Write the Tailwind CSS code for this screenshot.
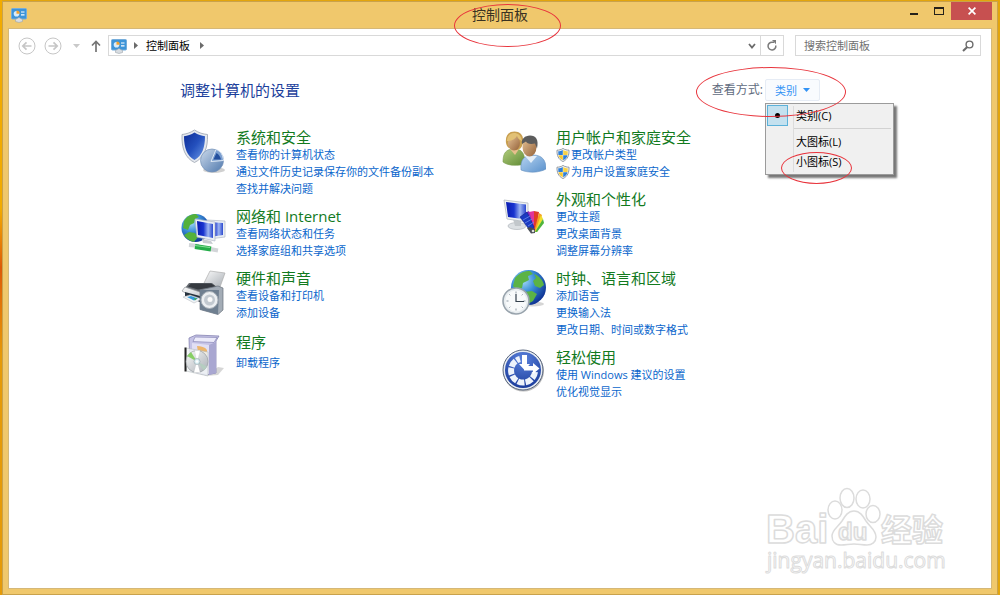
<!DOCTYPE html>
<html lang="zh-CN">
<head>
    <meta charset="UTF-8">
    <meta name="viewport" content="width=device-width, initial-scale=1.0">
    <title>控制面板</title>
    <script src="https://cdn.jsdelivr.net/npm/@tailwindcss/browser@4"></script>
</head>
<body class="relative flex min-h-screen bg-[#e3a50c] px-[2px] pt-px font-['Open_Sans','Noto_Sans_CJK_SC',sans-serif] text-[11px] leading-[17px] text-black">
    <!-- desktop showing past the left edge of the window -->
    <div class="absolute inset-y-0 left-0 w-[2px] bg-linear-to-b from-[#f2ab00] from-35% via-[#dc5a08] via-45% to-[#e59a08] to-60%"></div>

    <!-- shared shapes -->
    <svg class="absolute h-0 w-0" aria-hidden="true">
        <defs>
            <linearGradient id="blue" x1="0" y1="0" x2="1" y2="1"><stop offset="0" stop-color="#0d2c96"/><stop offset=".5" stop-color="#2450bd"/><stop offset="1" stop-color="#6d9ae6"/></linearGradient>
            <linearGradient id="screen" x1="0" y1="0" x2="1" y2="0"><stop offset="0" stop-color="#0a1bb0"/><stop offset=".4" stop-color="#1934d0"/><stop offset=".7" stop-color="#9db5f2"/><stop offset="1" stop-color="#2b48cf"/></linearGradient>
            <linearGradient id="silver" x1="0" y1="0" x2="1" y2="1"><stop offset="0" stop-color="#fafafa"/><stop offset="1" stop-color="#a9afb5"/></linearGradient>
            <linearGradient id="steel" x1="0" y1="0" x2="1" y2="1"><stop offset="0" stop-color="#cbd9ea"/><stop offset="1" stop-color="#5079ae"/></linearGradient>
            <linearGradient id="skin" x1="0" y1="0" x2="1" y2="1"><stop offset="0" stop-color="#e6c396"/><stop offset="1" stop-color="#94623a"/></linearGradient>
            <linearGradient id="green" x1="0" y1="0" x2="1" y2="1"><stop offset="0" stop-color="#b2cd7c"/><stop offset="1" stop-color="#5f8a35"/></linearGradient>
            <linearGradient id="shirt" x1="0" y1="0" x2="1" y2="1"><stop offset="0" stop-color="#b7d4f1"/><stop offset="1" stop-color="#5a91cc"/></linearGradient>
            <radialGradient id="ocean" cx=".35" cy=".3" r=".75"><stop offset="0" stop-color="#a8dcf8"/><stop offset=".45" stop-color="#3a8ed8"/><stop offset="1" stop-color="#0c2f91"/></radialGradient>
            <radialGradient id="royal" cx=".5" cy=".2" r=".8"><stop offset="0" stop-color="#5b82dc"/><stop offset="1" stop-color="#1b3c9c"/></radialGradient>
            <symbol id="panel" viewBox="0 0 16 16">
                <rect x=".5" y="1.500" width="15" height="10.500" rx="1" fill="#3d94d8" stroke="#75addb"/>
                <circle cx="5.500" cy="6.800" r="2.800" fill="#d8ecfa"/><path d="M5.500 6.800V3.500A3.200 3.200 0 0 1 8.700 6.800z" fill="#f2a12e"/>
                <path d="M10 5h3.500M10 7.800h3.500" stroke="#fff" stroke-width="1.200"/>
                <path d="M4.500 12.500l3.500-2 3.500 2v2L8 15.500l-3.500-1z" fill="#d8dde2" stroke="#9aa2aa" stroke-width=".6"/>
            </symbol>
            <symbol id="uac" viewBox="0 0 14 14">
                <path d="M7 .5C5 1.800 3 2.200 1 2.200 .8 7.500 2.500 11.500 7 13.500c4.500-2 6.200-6 6-11.300C11 2.200 9 1.800 7 .5z" fill="#fff" stroke="#8e969e"/>
                <path d="M6.800 2C5.300 2.900 3.800 3.200 2.200 3.200L2.400 7h4.400z" fill="#2f7fd8"/><path d="M7.200 2c1.500.9 3 1.200 4.600 1.200L11.600 7H7.200z" fill="#f7d148"/>
                <path d="M2.500 7.300h4.300v4.900C4.200 11 2.900 9.300 2.500 7.300z" fill="#f7c931"/><path d="M11.500 7.300H7.200v4.900c2.600-1.200 3.900-2.900 4.300-4.900z" fill="#2f7fd8"/>
            </symbol>
        </defs>
    </svg>

    <div class="relative flex flex-1 flex-col border border-[#c9a24c] bg-[#f0c86c]">
        <!-- title bar -->
        <header class="grid h-[26px] grid-cols-[1fr_auto_1fr]">
            <svg class="mt-[5px] ml-2 h-4 w-4"><use href="#panel"/></svg>
            <h1 class="relative text-sm leading-[25px] text-[#3a3222]">控制面板
                <span class="absolute top-[2px] -left-[18px] z-10 h-[43px] w-[107px] rounded-[50%] border border-[#e8343c]"></span>
            </h1>
            <div class="flex justify-end pr-[5px]">
                <button type="button" aria-label="最小化" class="flex h-[18px] w-[25px] justify-center pt-[11px]"><span class="h-[2px] w-[8px] bg-[#26221a]"></span></button>
                <button type="button" aria-label="最大化" class="flex h-[18px] w-[25px] justify-center pt-[5px]"><span class="h-[8px] w-[10px] border border-t-2 border-[#26221a]"></span></button>
                <button type="button" aria-label="关闭" class="flex h-[18px] w-[41px] items-center justify-center bg-[#c75050]">
                    <svg class="h-2 w-2" viewBox="0 0 8 8"><path d="M.6 .6l6.800 6.800M7.400 .6L.6 7.400" stroke="#fff" stroke-width="1.700"/></svg>
                </button>
            </div>
        </header>

        <div class="relative mx-[5px] mb-[5px] flex-1 border border-[#d5b878] bg-white">
            <!-- navigation bar -->
            <nav class="flex h-[27px] items-stretch pt-[6px] pr-[10px] pl-[9px]">
                <button type="button" aria-label="后退" class="flex w-[18px] items-center">
                    <svg class="h-[18px] w-[18px]" viewBox="0 0 18 18" fill="none" stroke="#c6c6c6"><circle cx="9" cy="9" r="8"/><path d="M13.500 9H5M8.500 5.300L4.800 9l3.700 3.700" stroke-width="1.700"/></svg>
                </button>
                <button type="button" aria-label="前进" class="ml-2 flex w-[18px] items-center">
                    <svg class="h-[18px] w-[18px]" viewBox="0 0 18 18" fill="none" stroke="#c6c6c6"><circle cx="9" cy="9" r="8"/><path d="M4.500 9H13M9.500 5.300L13.200 9l-3.700 3.700" stroke-width="1.700"/></svg>
                </button>
                <button type="button" aria-label="最近浏览的位置" class="ml-2 flex w-3 items-center justify-center">
                    <svg class="h-1 w-[7px]" viewBox="0 0 7 4"><path d="M0 0h7L3.500 4z" fill="#c9c9c9"/></svg>
                </button>
                <button type="button" aria-label="向上" class="ml-2 flex w-3 items-center justify-center">
                    <svg class="h-3 w-[10px]" viewBox="0 0 10 12" fill="none" stroke="#757575" stroke-width="1.700"><path d="M5 12V1.500M1 5.500l4-4 4 4"/></svg>
                </button>
                <div class="ml-[6px] flex flex-1 items-center border border-[#d9d9d9] pl-[2px]">
                    <svg class="h-4 w-4"><use href="#panel"/></svg>
                    <svg class="ml-[7px] h-[7px] w-1" viewBox="0 0 4 7"><path d="M0 0l4 3.500L0 7z" fill="#6b6b6b"/></svg>
                    <a href="#" class="ml-2 pb-px">控制面板</a>
                    <svg class="ml-[10px] h-[7px] w-1" viewBox="0 0 4 7"><path d="M0 0l4 3.500L0 7z" fill="#6b6b6b"/></svg>
                    <button type="button" aria-label="以前的位置" class="mr-1 ml-auto">
                        <svg class="h-[6px] w-2" viewBox="0 0 8 6" fill="none" stroke="#6b6b6b" stroke-width="1.800"><path d="M1 1l3 3.500L7 1"/></svg>
                    </button>
                </div>
                <button type="button" aria-label="刷新" class="flex w-[23px] items-center justify-center border border-l-0 border-[#d9d9d9]">
                    <svg class="h-[11px] w-[10px]" viewBox="0 0 10 11" fill="none" stroke="#7a7a7a" stroke-width="1.500"><path d="M8.800 5.500A3.900 3.900 0 1 1 5 2.200h2"/><path d="M5 0h4v4.200z" fill="#7a7a7a" stroke="none"/></svg>
                </button>
                <div class="ml-[11px] flex w-[186px] items-center border border-[#d9d9d9] pr-[6px] pl-2">
                    <input type="search" aria-label="搜索控制面板" placeholder="搜索控制面板" class="min-w-0 flex-1 pb-px outline-none placeholder:text-[#707070]">
                    <svg class="h-3 w-3" viewBox="0 0 12 12" fill="none" stroke="#6b6b6b"><circle cx="7.500" cy="4.500" r="3.400" stroke-width="1.400"/><path d="M5 7.200L1 11" stroke-width="2"/></svg>
                </div>
            </nav>

            <main class="px-[171px] pt-[23px]">
                <div class="flex h-[22px] items-center justify-between">
                    <h2 class="text-[15px] text-[#1c3f9c]">调整计算机的设置</h2>
                    <div class="relative flex items-center">
                        <span id="view-label" class="text-xs text-[#5f6b7d]">查看方式:</span>
                        <button type="button" aria-haspopup="true" aria-labelledby="view-label" class="ml-[2px] flex h-[22px] w-[55px] items-center justify-center gap-[6px] rounded-xs border border-[#e6ecf5] bg-[#f9fbfe] text-[#3393f5]">类别
                            <svg class="h-1 w-[7px]" viewBox="0 0 7 4"><path d="M0 0h7L3.500 4z" fill="#3393f5"/></svg>
                        </button>
                        <div role="menu" class="absolute top-[24px] right-[-74px] w-[129px] border border-[#9b9b9b] bg-[#f0f0f0] p-px pb-[3px] shadow-[3px_3px_2px_#777]">
                            <div class="absolute inset-y-[2px] left-[27px] border-l border-[#dcdcdc]"></div>
                            <button type="button" role="menuitemradio" aria-checked="true" class="relative flex h-[21px] w-full items-center">
                                <span class="flex h-[21px] w-[21px] items-center justify-center border border-[#5cb2da] bg-[#c4e1ef]"><span class="h-[5px] w-[5px] rounded-full bg-black"></span></span>
                                <span class="ml-2 pb-px">类别(C)</span>
                            </button>
                            <div class="mt-[2px] mr-px mb-[2px] ml-[26px] border-b border-[#d2d2d2]"></div>
                            <button type="button" role="menuitemradio" aria-checked="false" class="flex h-5 w-full items-center pl-[29px]">大图标(L)</button>
                            <button type="button" role="menuitemradio" aria-checked="false" class="relative flex h-5 w-full items-center pl-[29px]">小图标(S)
                                <span class="absolute top-px left-[14px] h-8 w-[71px] rounded-[50%] border border-[#e8343c]"></span>
                            </button>
                        </div>
                        <span class="pointer-events-none absolute -top-3 -left-4 h-[50px] w-[150px] rounded-[50%] border border-[#e8343c]"></span>
                    </div>
                </div>

                <div class="mt-[27px] grid grid-cols-2">
                    <ul class="flex flex-col gap-[10px]">
                        <li class="flex gap-[10px]">
                            <svg class="-mb-4 h-[46px] w-[46px]" viewBox="0 0 46 46">
                                <path d="M14.500 2C10 5 6 6 2 6.500 1.500 20 5 30 14.500 34.500 24 30 28 20 27.500 6.500 23 6 19 5 14.500 2z" fill="#e4e8ee" stroke="#9aa2ae" stroke-width=".8"/>
                                <path d="M14.500 4.500C11 6.800 7.500 7.900 4 8.300 4 20 7 28 14.500 32 22 28 25 20 25 8.300 21.500 7.900 18 6.800 14.500 4.500z" fill="url(#blue)"/>
                                <ellipse cx="34" cy="42" rx="11" ry="3" fill="#777" opacity=".35"/>
                                <circle cx="32" cy="32.500" r="11.500" fill="url(#steel)" stroke="#7592b8" stroke-width=".7"/>
                                <path d="M31 33.500L36 21.500c5 1.500 7 6 7.500 11z" fill="#7b9fd0" stroke="#dfe9f5"/><path d="M33.500 31.500L36.500 25c2.500 1.500 4 4 4.500 6.500z" fill="#24509e"/>
                            </svg>
                            <div>
                                <h3 class="text-[15px] leading-[18px]"><a href="#" class="text-[#127a1e]">系统和安全</a></h3>
                                <ul class="text-[#0a66cc]">
                                    <li><a href="#">查看你的计算机状态</a></li>
                                    <li><a href="#">通过文件历史记录保存你的文件备份副本</a></li>
                                    <li><a href="#">查找并解决问题</a></li>
                                </ul>
                            </div>
                        </li>
                        <li class="flex gap-[10px]">
                            <svg class="h-[46px] w-[46px]" viewBox="0 0 46 46">
                                <circle cx="15.500" cy="21" r="14" fill="url(#ocean)"/>
                                <path d="M4 14c3-5 7-7 12-7l3 3-4 2-1 4-4 2-2 5-5-2zM9 25l6 1 3 4-4 5c-5-1-8-4-10-7z" fill="#54b13b"/>
                                <path d="M27 13l18 1v16l-16 2z" fill="#e9eef5" stroke="#b1b9c5" stroke-width=".7"/><path d="M29 15l14 1v12l-13 2z" fill="url(#screen)"/>
                                <path d="M15 12l20 3v19l-18-4z" fill="#e9eef5" stroke="#b1b9c5" stroke-width=".7"/><path d="M17 14l16 3v14l-15-3z" fill="url(#screen)"/>
                                <path d="M22 32l9 2 2 3-10-1z" fill="#c8ccd1"/>
                                <path d="M9 38l10 1M30 42l8 1.500" stroke="#d2d5d8" stroke-width="4"/><path d="M15 39.500l16 2.500" stroke="#25ad49" stroke-width="5"/><path d="M15 38.500l15 2" stroke="#86e096" stroke-width="1"/>
                            </svg>
                            <div>
                                <h3 class="text-[15px] leading-[18px]"><a href="#" class="text-[#127a1e]">网络和 Internet</a></h3>
                                <ul class="text-[#0a66cc]">
                                    <li><a href="#">查看网络状态和任务</a></li>
                                    <li><a href="#">选择家庭组和共享选项</a></li>
                                </ul>
                            </div>
                        </li>
                        <li class="flex gap-[10px]">
                            <svg class="h-[46px] w-[46px]" viewBox="0 0 46 46">
                                <path d="M24 14l6-12 15 2-5 14z" fill="url(#silver)" stroke="#adadad" stroke-width=".7"/>
                                <path d="M9 14l23 0 7 6-19 5L5 19z" fill="#656a70"/><path d="M11 14.500h20l5 3-18 3-10-3z" fill="#363a40"/>
                                <path d="M2 22l3-4 15 5 17-4v8l-16 6z" fill="url(#silver)" stroke="#92979c" stroke-width=".7"/>
                                <path d="M5 23l15 4v6L5 27z" fill="#27323d"/><path d="M3 28l7-2 12 4-8 4z" fill="#f1f3f5" stroke="#aeb3b8" stroke-width=".5"/><path d="M7 28l4-1 7 2.500-4 2z" fill="#3498d8"/><path d="M14 29l3 .5-2 2z" fill="#46b04a"/>
                                <path d="M20 21l18-4 5 2v22l-5 4.500-18-5z" fill="#a3acb6" stroke="#68717b" stroke-width=".7"/><path d="M20 21l19 0-1 24.500-18-5z" fill="#6f7f90"/>
                                <circle cx="29.500" cy="31" r="8.500" fill="#eceff2" stroke="#a7afb7"/><circle cx="29.500" cy="31" r="5.500" fill="#c2c9d0"/><circle cx="30" cy="30.500" r="2.500" fill="#fafafa"/>
                            </svg>
                            <div>
                                <h3 class="text-[15px] leading-[18px]"><a href="#" class="text-[#127a1e]">硬件和声音</a></h3>
                                <ul class="text-[#0a66cc]">
                                    <li><a href="#">查看设备和打印机</a></li>
                                    <li><a href="#">添加设备</a></li>
                                </ul>
                            </div>
                        </li>
                        <li class="flex gap-[10px] pt-[2px]">
                            <svg class="h-[46px] w-[46px]" viewBox="0 0 46 46">
                                <path d="M38 34l6 1-6 7-12 1z" fill="#999" opacity=".4"/>
                                <path d="M9 5l7-3 23 1-3 5v32l-10 2L10 38z" fill="#c5c3e6" stroke="#8583b1" stroke-width=".8"/>
                                <path d="M15 4l22 .5-3 5-21-1z" fill="#ecebfa" stroke="#8a88b8" stroke-width=".7"/><path d="M12 10l17 2v29l-17-3z" fill="#e1dff4"/><path d="M29 12l7-3v31l-7 2z" fill="#a9a7d1"/>
                                <path d="M17 13c4 0 8 1 10 4v13l-8-5z" fill="#edb56a"/>
                                <path d="M6 15l22 4v24L6 38z" fill="#f0f4f5" stroke="#aeb5b7" stroke-width=".6" opacity=".85"/><path d="M5.500 14.500v24" stroke="#222" stroke-width="2"/>
                                <circle cx="17" cy="28.500" r="11" fill="url(#silver)" stroke="#9ba1a5" stroke-width=".7"/>
                                <path d="M17 28.500L7 23l4-4z" fill="#87cf65"/><path d="M17 28.500l10 5-3 4z" fill="#b5cdc0"/><path d="M17 28.500l-2-11h5z" fill="#fff"/><path d="M17 28.500l3 11-6 0z" fill="#fff"/>
                                <circle cx="17" cy="28.500" r="3" fill="#d8edf1" stroke="#8fa1a8" stroke-width=".6"/><circle cx="17" cy="28.500" r="1.200" fill="#fff"/>
                            </svg>
                            <div>
                                <h3 class="text-[15px] leading-[18px]"><a href="#" class="text-[#127a1e]">程序</a></h3>
                                <ul class="mt-[3px] text-[#0a66cc]">
                                    <li><a href="#">卸载程序</a></li>
                                </ul>
                            </div>
                        </li>
                    </ul>

                    <ul class="flex flex-col gap-[10px]">
                        <li class="flex gap-[10px]">
                            <svg class="h-[46px] w-[46px]" viewBox="0 0 46 46">
                                <path d="M3 34c0-9 3-13 11-13s11 4 11 15c-7 2-17 2-22-2z" fill="url(#green)" stroke="#789c4e" stroke-width=".6"/><path d="M10 21l5 6 4-6z" fill="#e7bf8d"/>
                                <path d="M6 15C5 7 9 3.500 14.500 3.500S24 7 23 15c-1 5-4 7-7 7-5 0-9-2-10-7z" fill="#c89f50"/><ellipse cx="14" cy="15" rx="6" ry="7.500" fill="url(#skin)"/><path d="M7 13c5 0 8-2 10-5 1 3 3 4 5 5-1-6-4-8-8-8s-7 3-7 8z" fill="#e2c175"/>
                                <path d="M21 42c-1-10 3-15 12-15s13 5 13 14c-7 4-18 4-25 1z" fill="url(#shirt)" stroke="#6490c0" stroke-width=".6"/><path d="M25 28l6 7 6-7z" fill="#e4eef8"/>
                                <ellipse cx="29.500" cy="19" rx="7" ry="9.500" fill="url(#skin)"/><path d="M22 16c-1-5 3-8.500 8-8.500 6 0 9 4 7 13l-2-5c-5 1-8 0-9-2z" fill="#5c5c5c"/>
                            </svg>
                            <div>
                                <h3 class="text-[15px] leading-[18px]"><a href="#" class="text-[#127a1e]">用户帐户和家庭安全</a></h3>
                                <ul class="text-[#0a66cc]">
                                    <li><a href="#" class="flex items-center gap-px"><svg class="h-[14px] w-[14px]"><use href="#uac"/></svg>更改帐户类型</a></li>
                                    <li><a href="#" class="flex items-center gap-px"><svg class="h-[14px] w-[14px]"><use href="#uac"/></svg>为用户设置家庭安全</a></li>
                                </ul>
                            </div>
                        </li>
                        <li class="flex gap-[10px]">
                            <svg class="h-[46px] w-[46px]" viewBox="0 0 46 46">
                                <ellipse cx="17" cy="36" rx="9" ry="3.500" fill="#dce0e3" stroke="#b0b6bb" stroke-width=".7"/><path d="M13 29l8 2v5h-6z" fill="#c2c7cb"/>
                                <path d="M4 10l24 3v19L7 29z" fill="#eef1f3" stroke="#b6bcc1" stroke-width=".8"/><path d="M6 12l20 2.500v15L8 27z" fill="url(#screen)"/>
                                <path d="M33 42l-4-20 5-1 2 20z" fill="#e0339b"/><path d="M34 42l0-21 5 1-3 20z" fill="#e03b28"/><path d="M34 42l5-19 3 2-5 17z" fill="#f5a021"/><path d="M35 42l6-17 2 4-6 13z" fill="#f0df2e"/><path d="M35 42l8-13 1 4-7 9z" fill="#4fb43d"/>
                                <path d="M33 42l-8-19 4-2 6 20z" fill="#8b2bbd"/><path d="M20 27l7-5 7 15-3 5z" fill="#1a3ac2" stroke="#102486" stroke-width=".6"/><path d="M23 30l7-4M25 33l7-4M28 36l6-4" stroke="#6c8dec" stroke-width=".8"/>
                                <path d="M27 38l3-1 5 2v4l-4 .5z" fill="#4a4e55"/><circle cx="33" cy="41" r="1.300" fill="#ddd"/>
                            </svg>
                            <div>
                                <h3 class="text-[15px] leading-[18px]"><a href="#" class="text-[#127a1e]">外观和个性化</a></h3>
                                <ul class="text-[#0a66cc]">
                                    <li><a href="#">更改主题</a></li>
                                    <li><a href="#">更改桌面背景</a></li>
                                    <li><a href="#">调整屏幕分辨率</a></li>
                                </ul>
                            </div>
                        </li>
                        <li class="flex gap-[10px]">
                            <svg class="h-[46px] w-[46px]" viewBox="0 0 46 46">
                                <ellipse cx="32" cy="35" rx="12" ry="2.500" fill="#888" opacity=".35"/>
                                <circle cx="28.500" cy="18.500" r="17.500" fill="url(#ocean)"/>
                                <path d="M15 9c5-6 10-7 15-7l3 3-5 2 1 4-6 3-1 5-5 2-4-4zM34 5c5 2 9 6 10 11l-4 3-5-2-2-5 3-3zM24 23l8-1 5 3-4 7-5 3-3-5z" fill="#5bb345"/>
                                <circle cx="16" cy="32" r="13" fill="#e8edf0" stroke="#98a3ac" stroke-width="1.600"/><circle cx="16" cy="32" r="10.500" fill="#f8fafb"/>
                                <path d="M16 22.500v2M16 39.500v2M6.500 32h2M23.500 32h2M9.300 25.300l1 1M22.700 25.300l-1 1M9.300 38.700l1-1M22.700 38.700l-1-1" stroke="#8f9aa5"/><path d="M16 25v7.500h8" fill="none" stroke="#34404c" stroke-width="1.200"/>
                            </svg>
                            <div>
                                <h3 class="text-[15px] leading-[18px]"><a href="#" class="text-[#127a1e]">时钟、语言和区域</a></h3>
                                <ul class="text-[#0a66cc]">
                                    <li><a href="#">添加语言</a></li>
                                    <li><a href="#">更换输入法</a></li>
                                    <li><a href="#">更改日期、时间或数字格式</a></li>
                                </ul>
                            </div>
                        </li>
                        <li class="flex gap-[10px]">
                            <svg class="h-[46px] w-[46px]" viewBox="0 0 46 46">
                                <circle cx="23.500" cy="23" r="20.500" fill="#777" opacity=".5"/>
                                <circle cx="23" cy="22" r="20" fill="#e6ebf2" stroke="#59667e"/><circle cx="23" cy="22" r="18" fill="url(#royal)"/>
                                <path d="M35 24A12 12 0 1 1 20 11" fill="none" stroke="#eef3fb" stroke-width="6" stroke-dasharray="6.800 1.200"/>
                                <path d="M22 7h5v9h3l-5.500 6-5.500-6h3z" fill="#fff"/><path d="M24 18h9v-3l6.500 5.500L33 26v-3.500h-9z" fill="#fff"/>
                            </svg>
                            <div>
                                <h3 class="text-[15px] leading-[18px]"><a href="#" class="text-[#127a1e]">轻松使用</a></h3>
                                <ul class="text-[#0a66cc]">
                                    <li><a href="#">使用 Windows 建议的设置</a></li>
                                    <li><a href="#">优化视觉显示</a></li>
                                </ul>
                            </div>
                        </li>
                    </ul>
                </div>
            </main>

            <!-- watermark -->
            <svg class="absolute right-[41px] bottom-[8px] h-[100px] w-[190px]" viewBox="0 0 190 100" fill="#fff" stroke="#dcdcdc" stroke-width="1.500" stroke-linejoin="round" aria-label="Baidu经验">
                <text x="6" y="63" font-family="Liberation Sans, sans-serif" font-weight="bold" font-size="40">Bai</text>
                <ellipse cx="75" cy="30" rx="7" ry="9"/><ellipse cx="87" cy="18" rx="7" ry="9.500"/><ellipse cx="103" cy="19" rx="7" ry="9"/><ellipse cx="113" cy="34" rx="7" ry="8.500"/>
                <path d="M94 31c6 0 9 5 12 10 4 6 10 9 10 16 0 5-4 8-9 8-5 0-8-1-13-1s-8 1-13 1c-6 0-9-4-9-9 0-6 6-9 10-15 3-5 6-10 12-10z"/>
                <text x="78" y="60" font-family="Liberation Sans, sans-serif" font-weight="bold" font-size="24" fill="#f8f8f8">du</text>
                <text x="121" y="61" font-family="Noto Sans CJK SC, sans-serif" font-weight="bold" font-size="31">经验</text>
                <text x="7" y="88" font-family="Open Sans, sans-serif" font-size="21" stroke-width="1">jingyan.baidu.com</text>
            </svg>
        </div>
    </div>
</body>
</html>
